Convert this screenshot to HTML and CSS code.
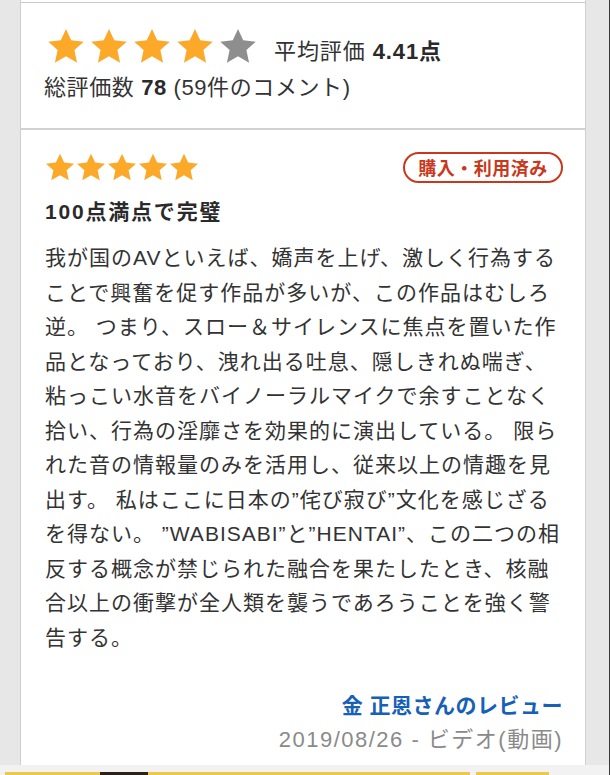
FILE: index.html
```html
<!DOCTYPE html>
<html lang="ja">
<head>
<meta charset="utf-8">
<link rel="stylesheet" href="styles.css">
</head>
<body>
<svg width="0" height="0" class="defs">
  <defs>
    <polygon id="star" points="12,0.8 15.3,7.9 23.2,8.8 17.3,14.1 19,22 12,18 5,22 6.7,14.1 0.8,8.8 8.7,7.9"/>
  </defs>
</svg>
<div class="page">
  <div class="card">
    <div class="prev"></div>
    <section class="summary">
      <div class="sum-row">
        <div class="stars big">
          <svg viewBox="0 0 24 23" class="star on"><use href="#star"/></svg>
          <svg viewBox="0 0 24 23" class="star on"><use href="#star"/></svg>
          <svg viewBox="0 0 24 23" class="star on"><use href="#star"/></svg>
          <svg viewBox="0 0 24 23" class="star on"><use href="#star"/></svg>
          <svg viewBox="0 0 24 23" class="star off"><use href="#star"/></svg>
        </div>
        <div class="avg">平均評価 <b>4.41点</b></div>
      </div>
      <div class="count">総評価数 <b>78</b> (59件のコメント)</div>
    </section>
    <section class="review">
      <div class="rev-head">
        <div class="stars small">
          <svg viewBox="0 0 24 23" class="star on"><use href="#star"/></svg>
          <svg viewBox="0 0 24 23" class="star on"><use href="#star"/></svg>
          <svg viewBox="0 0 24 23" class="star on"><use href="#star"/></svg>
          <svg viewBox="0 0 24 23" class="star on"><use href="#star"/></svg>
          <svg viewBox="0 0 24 23" class="star on"><use href="#star"/></svg>
        </div>
        <span class="badge">購入・利用済み</span>
      </div>
      <h3 class="title">100点満点で完璧</h3>
      <p class="body">我が国のAVといえば、嬌声を上げ、激しく行為する<br>ことで興奮を促す作品が多いが、この作品はむしろ<br>逆。 つまり、スロー＆サイレンスに焦点を置いた作<br>品となっており、洩れ出る吐息、隠しきれぬ喘ぎ、<br>粘っこい水音をバイノーラルマイクで余すことなく<br>拾い、行為の淫靡さを効果的に演出している。 限ら<br>れた音の情報量のみを活用し、従来以上の情趣を見<br>出す。 私はここに日本の”侘び寂び”文化を感じざる<br>を得ない。 ”WABISABI”と”HENTAI”、この二つの相<br>反する概念が禁じられた融合を果たしたとき、核融<br>合以上の衝撃が全人類を襲うであろうことを強く警<br>告する。</p>
      <div class="author">金 正恩さんのレビュー</div>
      <div class="date">2019/08/26 - ビデオ(動画)</div>
    </section>
  </div>
  <div class="below">
    <div class="thumb t1"><span class="dark"></span></div>
    <div class="thumb t2"></div>
  </div>
</div>
</body>
</html>
```

FILE: styles.css
```css
html, body {
  margin: 0;
  padding: 0;
}
body {
  width: 610px;
  height: 775px;
  overflow: hidden;
  background: #e8e7e8;
  font-family: "Liberation Sans", "Noto Sans CJK JP", sans-serif;
  color: #333;
}
.defs {
  position: absolute;
  width: 0;
  height: 0;
}
.page {
  width: 610px;
  box-sizing: border-box;
  border-right: 1px solid #3a3a3a;
  height: 775px;
  display: flex;
  flex-direction: column;
}
.card {
  margin-left: 20px;
  width: 566px;
  box-sizing: border-box;
  background: #fff;
  border-left: 1px solid #cfcfcf;
  border-right: 1px solid #cfcfcf;
}
.prev {
  height: 2px;
  border-bottom: 1px solid #c8c8c8;
}
.summary {
  padding: 24px 0 27px 26px;
  border-bottom: 2px solid #d2d2d2;
}
.sum-row {
  display: flex;
  align-items: flex-end;
}
.stars {
  display: flex;
}
.star {
  display: block;
}
.star.on { fill: #fca92a; }
.star.off { fill: #8e8e8e; }
.stars.big { gap: 5px; }
.stars.big .star { width: 38px; height: 38px; }
.avg {
  margin-left: 17px;
  font-size: 22px;
  line-height: 26px;
  letter-spacing: 0.9px;
  color: #333;
}
.avg b, .count b {
  font-weight: 700;
  color: #2a2a2a;
}
.count {
  margin-top: 10px;
  margin-left: -3px;
  font-size: 22px;
  line-height: 26px;
  letter-spacing: 0.6px;
}
.review {
  padding: 21px 22px 10px 24px;
}
.rev-head {
  display: flex;
  justify-content: space-between;
  align-items: center;
  height: 32px;
}
.stars.small { gap: 1px; }
.stars.small .star { width: 30px; height: 30px; }
.badge {
  box-sizing: border-box;
  height: 31px;
  width: 160px;
  border: 2px solid #c9381c;
  border-radius: 16px;
  color: #c9381c;
  font-size: 18px;
  font-weight: 700;
  display: flex;
  align-items: center;
  justify-content: center;
  letter-spacing: 0.5px;
}
.title {
  margin: 14px 0 0;
  font-size: 21px;
  font-weight: 700;
  line-height: 30px;
  color: #2a2a2a;
  letter-spacing: 1.8px;
}
.body {
  margin: 14px 0 0;
  font-size: 21px;
  line-height: 34.5px;
  letter-spacing: 1px;
  white-space: nowrap;
  color: #333;
}
.author {
  margin-top: 36px;
  text-align: right;
  font-size: 21px;
  font-weight: 700;
  line-height: 30px;
  color: #1760b8;
  letter-spacing: 0.5px;
}
.date {
  margin-top: 4px;
  text-align: right;
  font-size: 22px;
  line-height: 30px;
  color: #8a8a8a;
  letter-spacing: 1.5px;
}
.below {
  flex: 1;
  background: #f2f2f2;
  display: flex;
  align-items: flex-end;
  gap: 6px;
  padding-left: 5px;
}
.thumb {
  height: 3px;
  background: #ecc94e;
  position: relative;
}
.t1 { width: 465px; }
.t2 { width: 73px; }
.dark {
  position: absolute;
  left: 95px;
  top: 0;
  width: 48px;
  height: 3px;
  background: #2a2218;
}
```
